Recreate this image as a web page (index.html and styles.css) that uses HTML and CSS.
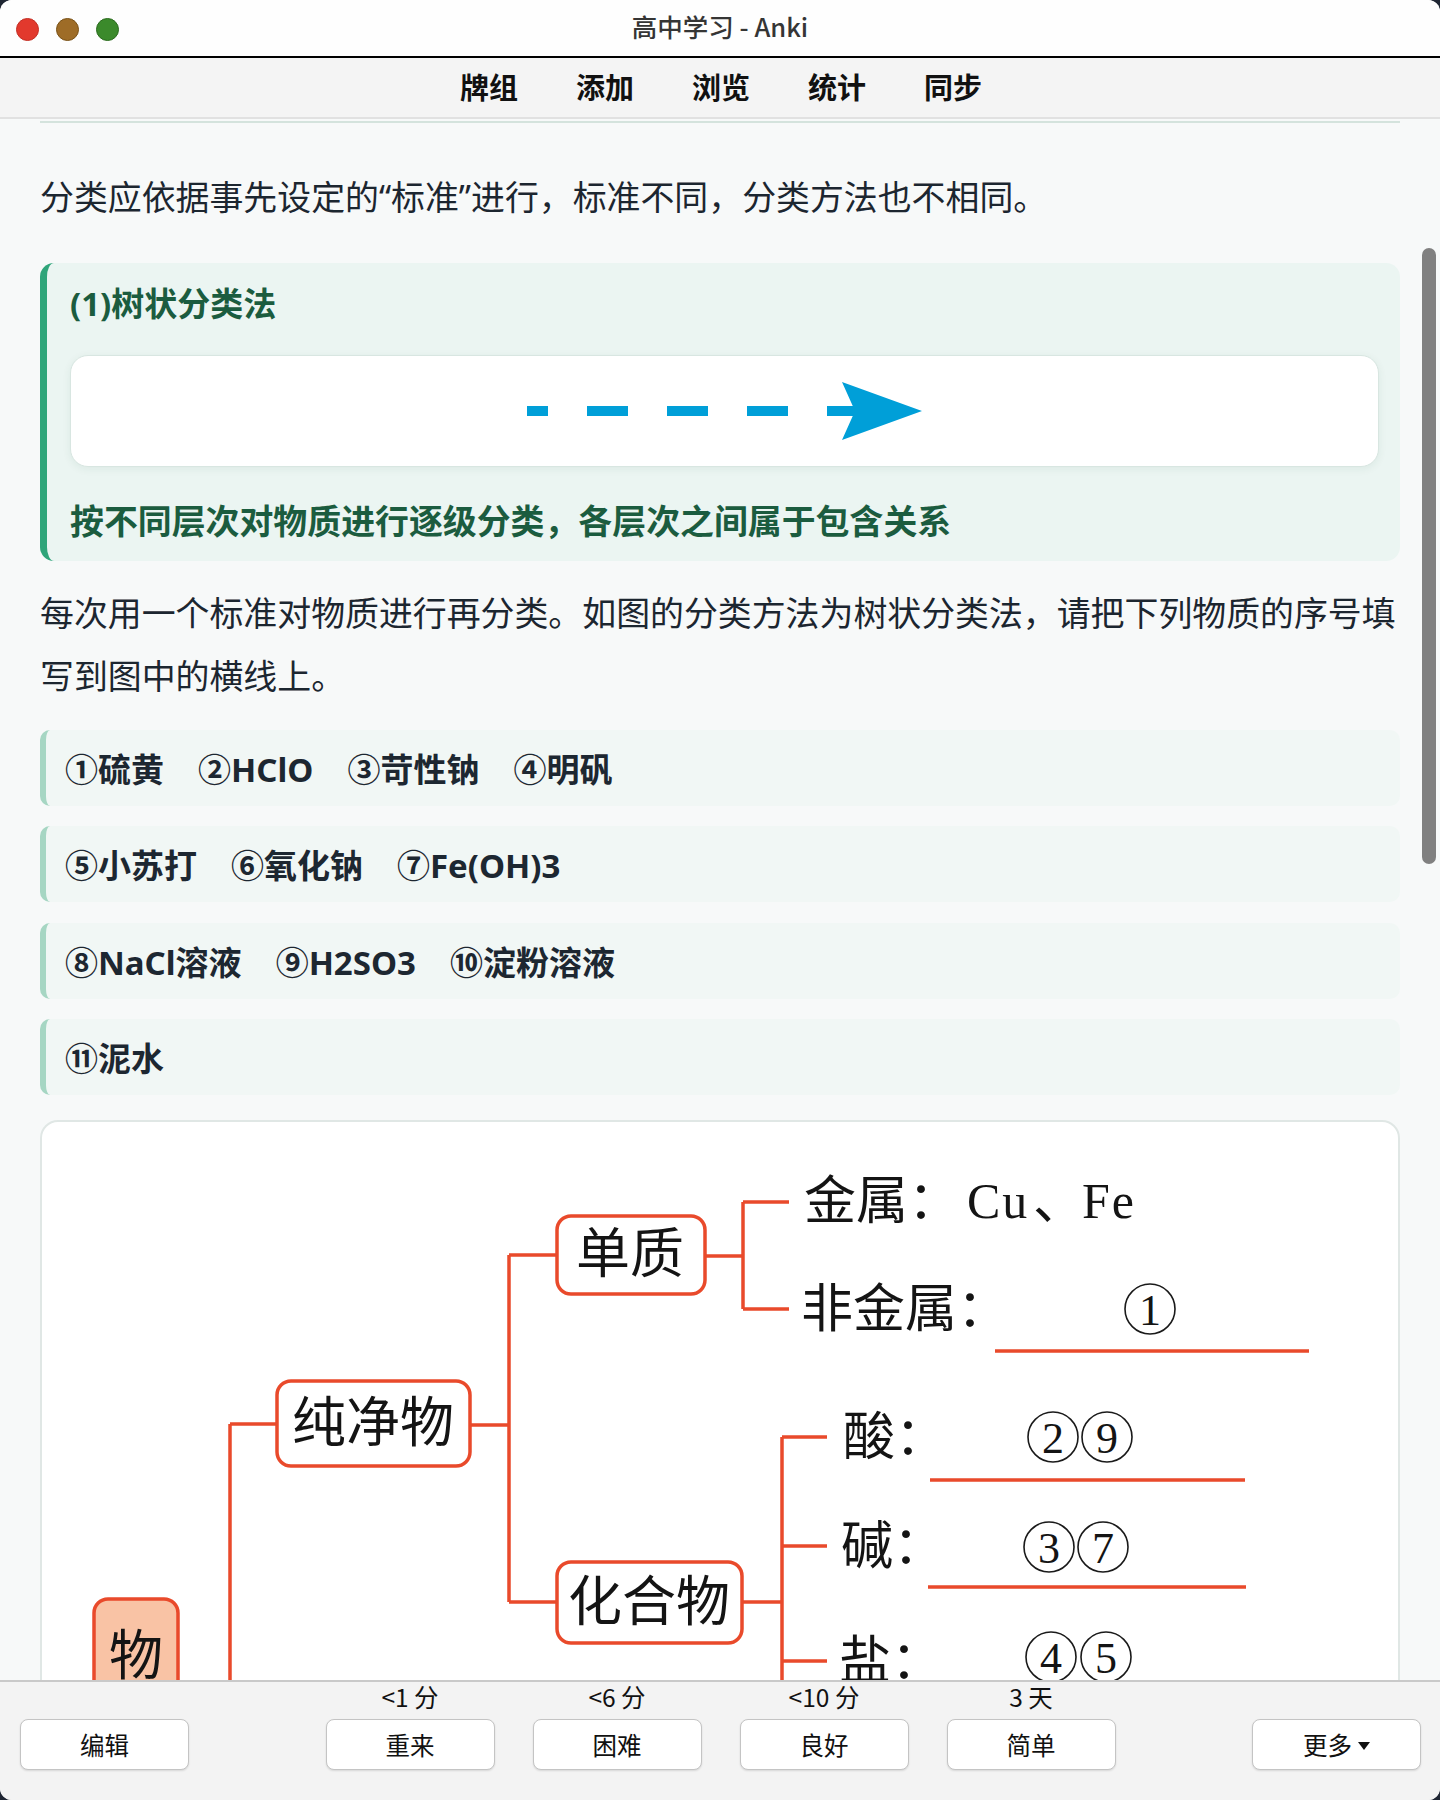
FILE: index.html
```html
<!DOCTYPE html>
<html lang="zh-CN">
<head>
<meta charset="utf-8">
<title>高中学习 - Anki</title>
<link rel="stylesheet" href="styles.css">
</head>
<body>
<div class="window">
  <header class="titlebar">
    <div class="lights">
      <span class="light red"></span>
      <span class="light yellow"></span>
      <span class="light green"></span>
    </div>
    <div class="title">高中学习 - Anki</div>
    <div class="spacer"></div>
  </header>
  <nav class="toolbar">
    <a class="tool">牌组</a>
    <a class="tool">添加</a>
    <a class="tool">浏览</a>
    <a class="tool">统计</a>
    <a class="tool">同步</a>
  </nav>
  <main class="content">
    <div class="rule"></div>
    <p class="para first">分类应依据事先设定的“标准”进行，标准不同，分类方法也不相同。</p>
    <section class="callout">
      <h3 class="callout-title">(1)树状分类法</h3>
      <div class="arrow-card">
        <svg class="arrow" width="395" height="60" viewBox="0 0 395 60">
          <g fill="#009fd8">
            <rect x="0" y="25" width="21" height="10"/>
            <rect x="60" y="25" width="41" height="10"/>
            <rect x="140" y="25" width="41" height="10"/>
            <rect x="220" y="25" width="41" height="10"/>
            <rect x="300" y="25" width="30" height="10"/>
            <polygon points="315,1 395,30 315,59 328,30"/>
          </g>
        </svg>
      </div>
      <p class="callout-text">按不同层次对物质进行逐级分类，各层次之间属于包含关系</p>
    </section>
    <p class="para">每次用一个标准对物质进行再分类。如图的分类方法为树状分类法，请把下列物质的序号填写到图中的横线上。</p>
    <div class="item"><span>①硫黄</span><span>②HClO</span><span>③苛性钠</span><span>④明矾</span></div>
    <div class="item"><span>⑤小苏打</span><span>⑥氧化钠</span><span>⑦Fe(OH)3</span></div>
    <div class="item"><span>⑧NaCl溶液</span><span>⑨H2SO3</span><span>⑩淀粉溶液</span></div>
    <div class="item"><span>⑪泥水</span></div>
    <div class="figure">
      <svg class="tree" width="1354" height="720" viewBox="2 2 1354 720">
        <g fill="none" stroke="#e94a2b" stroke-width="3.5">
          <path d="M190 304 V740 M190 304 H237"/>
          <path d="M430 305 H469 M469 135 V482 M469 135 H517 M469 482 H517"/>
          <path d="M665 136 H703 M703 82 V189 M703 82 H749 M703 189 H749"/>
          <path d="M702 482 H742 M742 317 V740 M742 317 H787 M742 426 H787 M742 541 H787"/>
          <path d="M955 231 H1269 M890 360 H1205 M888 467 H1206"/>
        </g>
        <g stroke="#e94a2b" stroke-width="3.5">
          <rect x="517" y="96" width="148" height="78" rx="14" fill="#fff"/>
          <rect x="237" y="261" width="193" height="85" rx="14" fill="#fff"/>
          <rect x="517" y="442" width="185" height="81" rx="14" fill="#fff"/>
          <rect x="54" y="479" width="84" height="170" rx="14" fill="#f9c3a5"/>
        </g>
        <g class="node-text" text-anchor="middle" dominant-baseline="central">
          <text x="590" y="135">单质</text>
          <text x="333" y="304">纯净物</text>
          <text x="609" y="483">化合物</text>
          <text x="96" y="537">物</text>
        </g>
        <g class="label-text" dominant-baseline="central">
          <text x="764" y="81">金属：</text>
          <text class="latin" x="927" y="81">Cu</text>
          <text x="993" y="81">、</text>
          <text class="latin" x="1042" y="81">Fe</text>
          <text x="761" y="189">非金属：</text>
          <text x="803" y="317">酸：</text>
          <text x="801" y="426">碱：</text>
          <text x="799" y="541">盐：</text>
        </g>
        <g fill="none" stroke="#1a1a1a" stroke-width="1.6">
          <circle cx="1110" cy="189" r="25"/>
          <circle cx="1013" cy="317" r="25"/>
          <circle cx="1067" cy="317" r="25"/>
          <circle cx="1009" cy="427" r="25"/>
          <circle cx="1063" cy="427" r="25"/>
          <circle cx="1011" cy="537" r="25"/>
          <circle cx="1066" cy="537" r="25"/>
        </g>
        <g class="digit-text" text-anchor="middle" dominant-baseline="central">
          <text x="1110" y="190">1</text>
          <text x="1013" y="318">2</text>
          <text x="1067" y="318">9</text>
          <text x="1009" y="428">3</text>
          <text x="1063" y="428">7</text>
          <text x="1011" y="538">4</text>
          <text x="1066" y="538">5</text>
        </g>
      </svg>
    </div>
    <div class="scrollbar"></div>
  </main>
  <footer class="answerbar">
    <button class="btn side">编辑</button>
    <div class="answers">
      <div class="answer"><span class="due">&lt;1 分</span><button class="btn">重来</button></div>
      <div class="answer"><span class="due">&lt;6 分</span><button class="btn">困难</button></div>
      <div class="answer"><span class="due">&lt;10 分</span><button class="btn">良好</button></div>
      <div class="answer"><span class="due">3 天</span><button class="btn">简单</button></div>
    </div>
    <button class="btn side more">更多<svg class="caret" width="12" height="8" viewBox="0 0 12 8"><polygon points="0,0 12,0 6,8" fill="#111"/></svg></button>
  </footer>
</div>
</body>
</html>
```
FILE: styles.css
```css
* { box-sizing: border-box; }
html, body { margin: 0; padding: 0; }
body {
  width: 1440px;
  height: 1800px;
  overflow: hidden;
  background: #1f2633;
  font-family: "Noto Sans", "Noto Sans CJK SC", sans-serif;
}
.window {
  width: 1440px;
  height: 1800px;
  display: flex;
  flex-direction: column;
  border-radius: 12px;
  overflow: hidden;
  background: #fff;
}
.titlebar {
  flex: none;
  display: grid;
  grid-template-columns: 1fr auto 1fr;
  align-items: center;
  background: #fefefe;
  border-bottom: 2px solid #000;
  height: 58px;
}
.lights {
  display: flex;
  gap: 17px;
  padding-left: 16px;
  padding-top: 2px;
}
.light {
  width: 23px;
  height: 23px;
  border-radius: 50%;
  display: block;
}
.red { background: #e2392d; border: 1px solid #c42f25; }
.yellow { background: #9e6c27; border: 1px solid #7a5217; }
.green { background: #3b8a2b; border: 1px solid #2b6c1e; }
.title {
  font-family: "Noto Sans CJK SC", sans-serif;
  font-size: 25.5px;
  font-weight: 500;
  color: #353535;
  padding-bottom: 5px;
}
.toolbar {
  flex: none;
  height: 61px;
  display: flex;
  justify-content: center;
  align-items: center;
  gap: 58px;
  background: #f4f4f4;
  border-bottom: 2px solid #e1e1e1;
  padding-left: 2px;
  padding-bottom: 4px;
}
.tool {
  font-family: "Noto Sans CJK SC", sans-serif;
  font-size: 29px;
  font-weight: 700;
  color: #111;
  line-height: 40px;
}
.content {
  flex: 1;
  position: relative;
  overflow: hidden;
  background: #f7f9f9;
  padding: 0 40px;
  color: #1c2630;
}
.rule {
  height: 2px;
  margin-top: 2px;
  background: #d4e3dd;
}
.para {
  margin: 21.5px 0 0;
  font-size: 33.9px;
  line-height: 63px;
  color: #1c2630;
}
.para.first { margin-top: 42.5px; }
.callout {
  margin-top: 34px;
  background: #ebf5f2;
  border-left: 7px solid #2fa57a;
  border-radius: 14px;
  padding: 20px 21px 19px 23px;
}
.callout-title {
  margin: 0;
  font-size: 33px;
  line-height: 42px;
  font-weight: 700;
  color: #1b5c3f;
}
.arrow-card {
  margin-top: 30px;
  height: 112px;
  background: #fff;
  border: 1.5px solid #d8e6e1;
  border-radius: 18px;
  box-shadow: 0 2px 8px rgba(30, 80, 60, 0.07);
  display: flex;
  align-items: center;
  justify-content: center;
}
.arrow { display: block; }
.callout-text {
  margin: 33px 0 0;
  font-size: 33.9px;
  line-height: 42px;
  font-weight: 700;
  color: #1b5c3f;
}
.item {
  margin-top: 20.5px;
  height: 76px;
  display: flex;
  align-items: center;
  gap: 34px;
  padding-left: 19px;
  background: #f1f7f5;
  border-left: 6px solid #a6d6c3;
  border-radius: 10px;
  font-size: 33px;
  font-weight: 700;
  color: #1d2731;
}
.para + .item { margin-top: 21.5px; }
.figure {
  margin-top: 24.5px;
  height: 740px;
  background: #fff;
  border: 2px solid #e0e7e5;
  border-radius: 18px;
  overflow: hidden;
}
.tree { display: block; }
.node-text text {
  font-family: "Liberation Serif", "Noto Sans CJK SC", serif;
  font-size: 54px;
  fill: #141414;
}
.label-text text {
  font-family: "Liberation Serif", "Noto Sans CJK SC", serif;
  font-size: 52px;
  fill: #141414;
}
.label-text .latin {
  font-size: 50px;
  letter-spacing: 2px;
}
.digit-text text {
  font-family: "Liberation Serif", serif;
  font-size: 44px;
  fill: #141414;
}
.scrollbar {
  position: absolute;
  right: 4px;
  top: 129px;
  width: 14px;
  height: 616px;
  border-radius: 7px;
  background: #808080;
}
.answerbar {
  flex: none;
  height: 120px;
  background: #f3f3f3;
  border-top: 2px solid #c9c9c9;
  padding: 1px 19px 0 20px;
  display: grid;
  grid-template-columns: 1fr auto 1fr;
  align-items: start;
}
.answers {
  display: flex;
  gap: 38px;
}
.answer {
  display: flex;
  flex-direction: column;
  align-items: center;
}
.due {
  font-family: "Noto Sans CJK SC", sans-serif;
  font-size: 24.5px;
  line-height: 28px;
  color: #111;
  margin-bottom: 8px;
}
.btn {
  width: 169px;
  height: 51px;
  background: #fff;
  border: 1px solid #c4c4c4;
  border-radius: 8px;
  box-shadow: 0 1px 2px rgba(0, 0, 0, 0.12);
  font-family: "Noto Sans CJK SC", sans-serif;
  font-size: 24.5px;
  color: #111;
  padding: 0;
  display: flex;
  align-items: center;
  justify-content: center;
}
.side { margin-top: 36px; }
.more { justify-self: end; gap: 6px; }
.caret { display: block; margin-top: 2px; }
```
